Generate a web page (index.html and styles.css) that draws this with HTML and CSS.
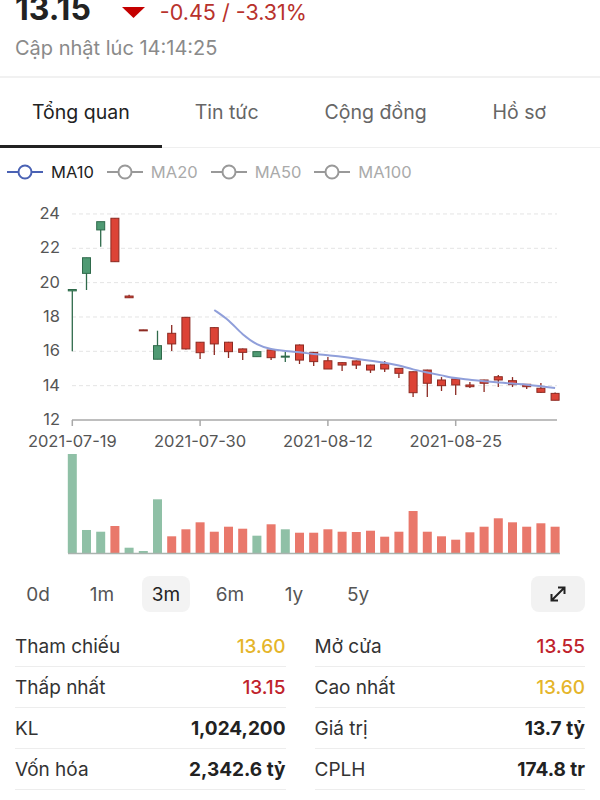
FILE: index.html
```html
<!DOCTYPE html>
<html lang="vi">
<head>
    <meta charset="UTF-8">
    <meta name="viewport" content="width=device-width, initial-scale=1.0">
    <title>Tổng quan cổ phiếu</title>
    <link rel="stylesheet" href="styles.css">
</head>
<body>

<div class="quote">
    <div class="price-row">
        <span class="price">13.15</span>
        <svg class="arrow-down" width="23" height="11" viewBox="0 0 23 11"><polygon points="0,0 23,0 11.5,11"/></svg>
        <span class="change">-0.45 / -3.31%</span>
    </div>
    <p class="updated">Cập nhật lúc 14:14:25</p>
</div>

<div class="tabs">
    <div class="tab active">Tổng quan</div>
    <div class="tab">Tin tức</div>
    <div class="tab">Cộng đồng</div>
    <div class="tab">Hồ sơ</div>
</div>

<div class="legend">
    <div class="legend-item active">
        <svg class="ma-icon" width="36" height="16" viewBox="0 0 36 16"><line x1="0" y1="8" x2="36" y2="8"/><circle cx="18" cy="8" r="6.5"/></svg>
        <span>MA10</span>
    </div>
    <div class="legend-item">
        <svg class="ma-icon" width="36" height="16" viewBox="0 0 36 16"><line x1="0" y1="8" x2="36" y2="8"/><circle cx="18" cy="8" r="6.5"/></svg>
        <span>MA20</span>
    </div>
    <div class="legend-item">
        <svg class="ma-icon" width="36" height="16" viewBox="0 0 36 16"><line x1="0" y1="8" x2="36" y2="8"/><circle cx="18" cy="8" r="6.5"/></svg>
        <span>MA50</span>
    </div>
    <div class="legend-item">
        <svg class="ma-icon" width="36" height="16" viewBox="0 0 36 16"><line x1="0" y1="8" x2="36" y2="8"/><circle cx="18" cy="8" r="6.5"/></svg>
        <span>MA100</span>
    </div>
</div>

<!-- Candles + volume, drawn by the script below -->
<svg id="chart" class="chart" width="600" height="364" viewBox="0 196 600 364"></svg>

<div class="periods">
    <button class="period">0d</button>
    <button class="period">1m</button>
    <button class="period active">3m</button>
    <button class="period">6m</button>
    <button class="period">1y</button>
    <button class="period">5y</button>
    <button class="expand" aria-label="Phóng to">
        <svg width="20" height="20" viewBox="0 0 20 20"><path d="M3.5 16.5 L16.5 3.5 M10 3.5 H16.5 V10 M3.5 10 V16.5 H10"/></svg>
    </button>
</div>

<div class="stats">
    <div class="stat-row"><span class="label">Tham chiếu</span><span class="value ref">13.60</span></div>
    <div class="stat-row"><span class="label">Mở cửa</span><span class="value down">13.55</span></div>
    <div class="stat-row"><span class="label">Thấp nhất</span><span class="value down">13.15</span></div>
    <div class="stat-row"><span class="label">Cao nhất</span><span class="value ref">13.60</span></div>
    <div class="stat-row"><span class="label">KL</span><span class="value">1,024,200</span></div>
    <div class="stat-row"><span class="label">Giá trị</span><span class="value">13.7 tỷ</span></div>
    <div class="stat-row"><span class="label">Vốn hóa</span><span class="value">2,342.6 tỷ</span></div>
    <div class="stat-row"><span class="label">CPLH</span><span class="value">174.8 tr</span></div>
</div>

<script>
    // [open, high, low, close]
    const candles = [
        [19.52, 19.6, 16.0, 19.6], [20.54, 21.45, 19.57, 21.45], [23.07, 23.55, 22.09, 23.55],
        [23.75, 23.75, 21.22, 21.22], [19.22, 19.3, 19.1, 19.12], [17.25, 17.25, 17.22, 17.22],
        [15.54, 17.2, 15.54, 16.33], [17.05, 17.53, 16.02, 16.43], [17.98, 18.0, 16.1, 16.14],
        [16.53, 16.55, 15.55, 15.92], [17.38, 17.4, 15.79, 16.43], [16.53, 16.55, 15.61, 15.98],
        [16.14, 16.16, 15.49, 15.94], [15.69, 15.98, 15.69, 15.98], [16.08, 16.19, 15.49, 15.63],
        [15.67, 15.96, 15.38, 15.72], [16.37, 16.4, 15.26, 15.49], [15.94, 15.96, 15.15, 15.4],
        [15.45, 15.67, 14.97, 14.97], [15.34, 15.36, 14.85, 15.2], [15.44, 15.46, 14.97, 15.2],
        [15.2, 15.22, 14.74, 14.91], [15.26, 15.44, 14.8, 14.97], [15.01, 15.03, 14.45, 14.72],
        [14.81, 14.83, 13.34, 13.59], [14.91, 14.93, 13.34, 14.14], [14.33, 14.5, 13.69, 14.0],
        [14.39, 14.41, 13.46, 14.04], [14.04, 14.21, 13.86, 13.94], [14.33, 14.35, 13.63, 14.14],
        [14.52, 14.62, 13.92, 14.33], [14.29, 14.5, 13.92, 14.06], [14.08, 14.1, 13.81, 13.94],
        [13.85, 14.15, 13.57, 13.61], [13.55, 13.6, 13.15, 13.15]
    ];
    // thousand shares
    const volumes = [3855, 896, 829, 1051, 206, 78, 2091, 650, 923, 1195, 829, 1024, 946, 674, 1118,
        923, 790, 790, 923, 829, 818, 868, 635, 829, 1635, 829, 650, 518, 806, 1024, 1351, 1195,
        1024, 1157, 1024];
    const volumeSide = "GGGRGGGRRRRRRGRGRRRRRRRRRRRRRRRRRRR";
    const ma10 = [18.41, 17.8, 17.0, 16.42, 16.13, 16.02, 15.94, 15.85, 15.77, 15.69, 15.57, 15.45,
        15.34, 15.17, 14.95, 14.77, 14.6, 14.44, 14.35, 14.26, 14.19, 14.12, 14.06, 13.96, 13.86];
    const dates = [[0, "2021-07-19"], [9, "2021-07-30"], [18, "2021-08-12"], [27, "2021-08-25"]];

    const X0 = 72.3, STEP = 14.2, LEFT = 72, RIGHT = 557, BASE = 420;
    const xAt = i => X0 + i * STEP;
    const yAt = p => BASE - (p - 12) * 17.17;

    let svg = "";

    for (let p = 14; p <= 24; p += 2) {
        svg += `<line class="grid" x1="${LEFT}" y1="${yAt(p)}" x2="${RIGHT}" y2="${yAt(p)}"/>`;
    }
    for (let p = 12; p <= 24; p += 2) {
        svg += `<text class="axis-label" x="60" y="${yAt(p) - 1}" text-anchor="end">${p}</text>`;
    }
    svg += `<line class="axis" x1="${LEFT}" y1="${BASE}" x2="${RIGHT}" y2="${BASE}"/>`;
    dates.forEach(([i, label]) => {
        const x = xAt(i);
        svg += `<line class="axis" x1="${x}" y1="${BASE}" x2="${x}" y2="${BASE + 6}"/>`;
        svg += `<text class="axis-label" x="${x}" y="441" text-anchor="middle">${label}</text>`;
    });

    // moving average, smoothed with catmull-rom
    const pts = ma10.map((p, k) => [xAt(k + 10), yAt(p)]);
    let d = `M${pts[0][0]},${pts[0][1]}`;
    for (let k = 0; k < pts.length - 1; k++) {
        const p0 = pts[k - 1] || pts[k], p1 = pts[k], p2 = pts[k + 1], p3 = pts[k + 2] || p2;
        const c1 = [p1[0] + (p2[0] - p0[0]) / 6, p1[1] + (p2[1] - p0[1]) / 6];
        const c2 = [p2[0] - (p3[0] - p1[0]) / 6, p2[1] - (p3[1] - p1[1]) / 6];
        d += ` C${c1[0]},${c1[1]} ${c2[0]},${c2[1]} ${p2[0]},${p2[1]}`;
    }

    candles.forEach(([o, h, l, c], i) => {
        const x = xAt(i);
        const cls = c > o ? "up" : "down";
        const top = yAt(Math.max(o, c));
        const height = Math.max(yAt(Math.min(o, c)) - top, 1);
        svg += `<line class="wick ${cls}" x1="${x}" y1="${yAt(h)}" x2="${x}" y2="${yAt(l)}"/>`;
        svg += `<rect class="body ${cls}" x="${x - 4}" y="${top}" width="8" height="${height}"/>`;
    });
    svg += `<path class="ma" d="${d}"/>`;

    const maxVol = Math.max(...volumes);
    volumes.forEach((v, i) => {
        const h = v / maxVol * 99;
        const cls = volumeSide[i] === "G" ? "vol-up" : "vol-down";
        svg += `<rect class="${cls}" x="${xAt(i) - 4.5}" y="${553 - h}" width="9" height="${h}"/>`;
    });
    svg += `<line class="vol-base" x1="68" y1="553.5" x2="560" y2="553.5"/>`;

    document.getElementById("chart").innerHTML = svg;
</script>

</body>
</html>
```

FILE: styles.css
```css
* {
    margin: 0;
    padding: 0;
    box-sizing: border-box;
}
body {
    font-family: Inter, "Noto Sans", sans-serif;
    background-color: #fff;
    color: #222;
    width: 600px;
    overflow: hidden;
}
.quote {
    padding: 0 15px 16px;
    border-bottom: 2px solid #f1f1f1;
}
.price-row {
    display: flex;
    align-items: baseline;
    height: 30px;
    line-height: 30px;
    margin-top: -6px;
}
.price {
    font-size: 32px;
    font-weight: 700;
}
.arrow-down {
    align-self: flex-start;
    margin: 13px 15px 0 31px;
    fill: #c40000;
}
.change {
    font-size: 21.5px;
    color: #b8322c;
}
.updated {
    margin-top: 12px;
    font-size: 20px;
    line-height: 24px;
    color: #8a8a8a;
}
.tabs {
    display: flex;
    height: 70px;
    border-bottom: 1px solid #efefef;
}
.tab {
    display: flex;
    align-items: center;
    padding: 0 33px;
    margin-bottom: -1px;
    border-bottom: 3px solid transparent;
    font-size: 19.5px;
    color: #666;
}
.tab:first-child {
    padding: 0 32px;
}
.tab.active {
    color: #222;
    border-bottom-color: #222;
}
.legend {
    display: flex;
    align-items: center;
    gap: 13px;
    height: 48px;
    padding-left: 7px;
}
.legend-item {
    display: flex;
    align-items: center;
    gap: 8px;
    font-size: 16.5px;
    color: #aaa;
}
.legend-item.active {
    color: #222;
}
.ma-icon {
    fill: #fff;
    stroke: #999;
    stroke-width: 2;
}
.legend-item.active .ma-icon {
    stroke: #4a62b4;
}
.chart {
    display: block;
}
.chart .grid {
    stroke: #e4e4e4;
    stroke-width: 1;
    stroke-dasharray: 4 3;
}
.chart .axis {
    stroke: #a9a9a9;
    stroke-width: 1.5;
}
.chart .axis-label {
    font-size: 16.5px;
    fill: #555;
    dominant-baseline: central;
}
.chart .wick {
    stroke-width: 1.3;
}
.chart .body {
    stroke-width: 1;
}
.chart .up {
    fill: #4f9a73;
    stroke: #2f6a4b;
}
.chart .down {
    fill: #dc4336;
    stroke: #8c2a22;
}
.chart .ma {
    fill: none;
    stroke: #909fda;
    stroke-width: 2;
}
.chart .vol-up {
    fill: #8fc0a6;
}
.chart .vol-down {
    fill: #e9786b;
}
.chart .vol-base {
    stroke: #a9b3ae;
    stroke-width: 1.5;
}
.periods {
    display: flex;
    align-items: center;
    gap: 16px;
    padding: 16px 15px 0 14px;
}
.period {
    width: 48px;
    height: 36px;
    border: none;
    border-radius: 8px;
    background: none;
    font-family: inherit;
    font-size: 19px;
    color: #555;
}
.period.active {
    background-color: #f3f3f3;
    color: #222;
}
.expand {
    display: flex;
    align-items: center;
    justify-content: center;
    width: 54px;
    height: 36px;
    margin-left: auto;
    border: none;
    border-radius: 8px;
    background-color: #f2f2f2;
}
.expand svg {
    fill: none;
    stroke: #222;
    stroke-width: 2;
}
.stats {
    display: grid;
    grid-template-columns: 1fr 1fr;
    column-gap: 29px;
    padding: 14px 15px 0;
}
.stat-row {
    display: flex;
    justify-content: space-between;
    align-items: center;
    height: 41px;
    border-bottom: 1px solid #ededed;
    font-size: 19px;
}
.label {
    color: #333;
}
.value {
    font-weight: 700;
    color: #222;
}
.value.ref {
    font-weight: 500;
    color: #e5b52a;
}
.value.down {
    font-weight: 500;
    color: #c0222b;
}
```
